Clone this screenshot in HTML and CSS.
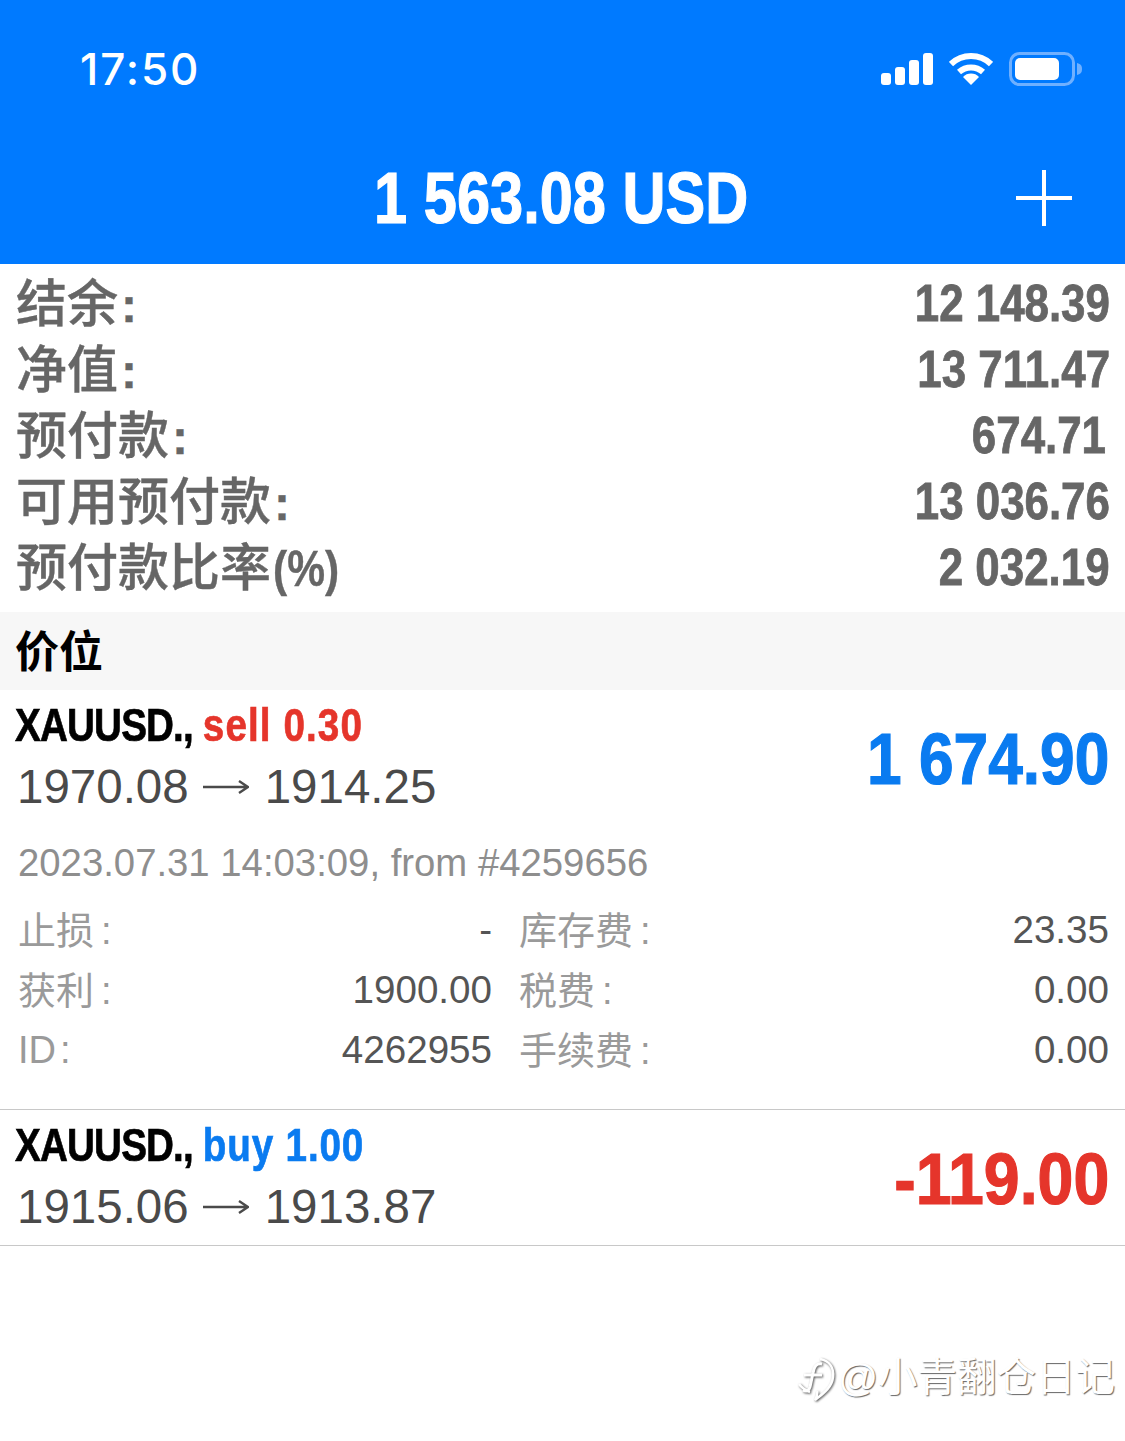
FILE: index.html
```html
<!DOCTYPE html>
<html lang="zh">
<head>
    <meta charset="UTF-8">
    <meta name="viewport" content="width=device-width, initial-scale=1.0">
    <title>交易</title>
    <link rel="stylesheet" href="styles.css">
</head>
<body>
    <header class="top-bar">
        <div class="status-bar">
            <span class="clock">17:50</span>
            <div class="status-icons">
                <svg width="52" height="34" viewBox="0 0 52 34">
                    <rect x="0" y="21" width="10" height="12" rx="3" fill="#fff"/>
                    <rect x="14" y="15" width="10" height="18" rx="3" fill="#fff"/>
                    <rect x="28" y="8" width="10" height="25" rx="3" fill="#fff"/>
                    <rect x="42" y="1" width="10" height="32" rx="3" fill="#fff"/>
                </svg>
                <svg width="44" height="34" viewBox="1 0 44 34">
                    <path d="M3 12 A29 29 0 0 1 43 12" fill="none" stroke="#fff" stroke-width="6"/>
                    <path d="M11 20 A18 18 0 0 1 35 20" fill="none" stroke="#fff" stroke-width="6"/>
                    <path d="M15 25 A11 11 0 0 1 31 25 L23 33 Z" fill="#fff"/>
                </svg>
                <svg width="74" height="34" viewBox="0 0 74 34">
                    <rect x="1.5" y="1.5" width="63" height="31" rx="9" fill="none" stroke="#6fb0ff" stroke-width="3"/>
                    <rect x="6" y="6" width="44" height="22" rx="5" fill="#fff"/>
                    <path d="M68 11 C72 12 73 14 73 17 C73 20 72 22 68 23 Z" fill="#6fb0ff"/>
                </svg>
            </div>
        </div>
        <div class="title-row">
            <h1 class="balance-title">1 563.08 USD</h1>
            <svg class="add-icon" width="56" height="56" viewBox="0 0 56 56">
                <path d="M26 0H30V26H56V30H30V56H26V30H0V26H26Z" fill="#fff"/>
            </svg>
        </div>
    </header>

    <section class="summary">
        <div class="summary-row"><span class="summary-label">结余<b class="colon">:</b></span><span class="summary-value">12 148.39</span></div>
        <div class="summary-row"><span class="summary-label">净值<b class="colon">:</b></span><span class="summary-value">13 711.47</span></div>
        <div class="summary-row"><span class="summary-label">预付款<b class="colon">:</b></span><span class="summary-value inset">674.71</span></div>
        <div class="summary-row"><span class="summary-label">可用预付款<b class="colon">:</b></span><span class="summary-value">13 036.76</span></div>
        <div class="summary-row"><span class="summary-label">预付款比率<b class="percent">(%)</b></span><span class="summary-value">2 032.19</span></div>
    </section>

    <h2 class="section-head">价位</h2>

    <article class="position expanded">
        <div class="position-main">
            <div class="position-info">
                <div class="position-name">XAUUSD., <span class="sell">sell 0.30</span></div>
                <div class="position-price">1970.08<svg class="arrow" width="46" height="20" viewBox="0 0 46 20"><path d="M0 10H45M36 4L45 10L36 16" fill="none" stroke="#4a4a4a" stroke-width="2.4"/></svg>1914.25</div>
            </div>
            <div class="position-profit gain">1 674.90</div>
        </div>
        <div class="position-date">2023.07.31 14:03:09, from #4259656</div>
        <div class="details">
            <span class="detail-label">止损<i class="colon-thin">:</i></span><span class="detail-value">-</span>
            <span class="detail-label">库存费<i class="colon-thin">:</i></span><span class="detail-value">23.35</span>
            <span class="detail-label">获利<i class="colon-thin">:</i></span><span class="detail-value">1900.00</span>
            <span class="detail-label">税费<i class="colon-thin">:</i></span><span class="detail-value">0.00</span>
            <span class="detail-label latin">ID<i class="colon-thin">:</i></span><span class="detail-value">4262955</span>
            <span class="detail-label">手续费<i class="colon-thin">:</i></span><span class="detail-value">0.00</span>
        </div>
    </article>

    <article class="position">
        <div class="position-main">
            <div class="position-info">
                <div class="position-name">XAUUSD., <span class="buy">buy 1.00</span></div>
                <div class="position-price">1915.06<svg class="arrow" width="46" height="20" viewBox="0 0 46 20"><path d="M0 10H45M36 4L45 10L36 16" fill="none" stroke="#4a4a4a" stroke-width="2.4"/></svg>1913.87</div>
            </div>
            <div class="position-profit loss">-119.00</div>
        </div>
    </article>

    <div class="watermark">
        <svg class="watermark-icon" width="38" height="46" viewBox="0 0 38 46">
            <path d="M22 3 C32 5 36 12 35 21 C34 31 26 37 17 44 C19 40 20 38 19 35" fill="none" stroke="#fff" stroke-width="2.5"/>
            <path d="M1 28 C3 31 7 34 12 36" fill="none" stroke="#fff" stroke-width="2.5"/>
            <path d="M24 8 C18 7 16 11 15 17 L12 31 C11 35 8 36 5 34 M6 19 H24" fill="none" stroke="#fff" stroke-width="3"/>
        </svg>
        <span>@小青翻仓日记</span>
    </div>
</body>
</html>
```

FILE: styles.css
```css
* {
    box-sizing: border-box;
}
html, body {
    margin: 0;
    padding: 0;
}
body {
    position: relative;
    width: 1125px;
    height: 1441px;
    overflow: hidden;
    background-color: #fff;
    font-family: "Liberation Sans", "Noto Sans CJK SC", sans-serif;
}
.top-bar {
    height: 264px;
    background-color: #007aff;
    color: #fff;
}
.status-bar {
    display: flex;
    justify-content: space-between;
    align-items: center;
    height: 138px;
    padding: 0 42px 0 80px;
}
.clock {
    font-family: "Inter", "Liberation Sans", sans-serif;
    font-size: 44px;
    font-weight: 500;
    letter-spacing: 1.9px;
}
.status-icons {
    display: flex;
    align-items: center;
    gap: 16px;
}
.title-row {
    position: relative;
    height: 126px;
    display: flex;
    justify-content: center;
    padding-right: 2px;
}
/* no condensed face installed, so the bold numbers get squeezed and thickened */
.balance-title {
    margin: 0;
    font-size: 72px;
    font-weight: 700;
    line-height: 120px;
    -webkit-text-stroke: 1.2px #fff;
    transform: scaleX(0.827);
}
.add-icon {
    position: absolute;
    right: 53px;
    top: 32px;
}
.summary {
    padding: 7px 15px 11px 16px;
    height: 348px;
}
.summary-row {
    display: flex;
    justify-content: space-between;
    align-items: center;
    height: 66px;
    color: #666;
}
.summary-label {
    padding-bottom: 8px;
    font-size: 51px;
    font-weight: 500;
    -webkit-text-stroke: 0.4px #666;
}
.colon {
    margin-left: 3px;
    font-size: 48px;
    font-weight: 700;
}
.percent {
    display: inline-block;
    margin-left: 2px;
    font-size: 50px;
    font-weight: 700;
    transform: scaleX(0.85);
    transform-origin: left;
}
.summary-value {
    padding-bottom: 2px;
    font-size: 51px;
    font-weight: 700;
    -webkit-text-stroke: 0.8px #666;
    transform: scaleX(0.86);
    transform-origin: right;
}
.summary-value.inset {
    margin-right: 4px;
}
.section-head {
    margin: 0;
    height: 78px;
    padding-left: 15px;
    background-color: #f7f7f7;
    color: #000;
    font-size: 44px;
    font-weight: 700;
    line-height: 82px;
}
.position {
    height: 136px;
    padding: 0 16px;
    border-bottom: 1px solid #c8c8c8;
}
.position.expanded {
    height: 420px;
}
.position-main {
    display: flex;
    justify-content: space-between;
    height: 136px;
}
.position-info {
    padding-top: 5px;
}
.position-name {
    margin-left: -1px;
    font-size: 46px;
    font-weight: 700;
    letter-spacing: -1px;
    line-height: 61px;
    color: #000;
    white-space: nowrap;
    -webkit-text-stroke: 0.7px #000;
    transform: scaleX(0.84);
    transform-origin: left;
}
.sell {
    color: #e5352b;
    letter-spacing: 1.3px;
    -webkit-text-stroke-color: #e5352b;
}
.buy {
    color: #0a7bf0;
    letter-spacing: 1px;
    -webkit-text-stroke-color: #0a7bf0;
}
.position-price {
    display: flex;
    align-items: center;
    padding-left: 1px;
    font-size: 47.5px;
    line-height: 62px;
    color: #4a4a4a;
}
.arrow {
    margin: 0 16px 0 14px;
}
.position-profit {
    align-self: center;
    padding-top: 1px;
    font-size: 72px;
    font-weight: 700;
    -webkit-text-stroke: 1.2px currentColor;
    transform: scaleX(0.864);
    transform-origin: right;
}
.gain {
    color: #0a7bf0;
}
.loss {
    color: #e5352b;
    transform: scaleX(0.895);
}
.position-date {
    margin-top: 7px;
    padding-left: 2px;
    font-size: 38.3px;
    line-height: 60px;
    color: #8e8e8e;
}
.details {
    display: grid;
    grid-template-columns: 160px 314px 199px 1fr;
    grid-auto-rows: 60px;
    margin-top: 7px;
    padding-left: 2px;
    align-items: center;
    font-size: 38px;
}
.detail-label {
    padding-bottom: 6px;
    color: #9a9a9a;
}
.detail-label.latin {
    padding: 1px 0 0;
}
.latin .colon-thin {
    margin-left: 4px;
}
.colon-thin {
    margin-left: 7px;
    font-style: normal;
}
.detail-value {
    font-size: 38.6px;
    text-align: right;
    color: #555;
}
.detail-label:nth-child(4n+3) {
    padding-left: 27px;
}
.watermark {
    position: absolute;
    right: 10px;
    top: 1345px;
    display: flex;
    align-items: center;
    gap: 2px;
    color: #fff;
    font-size: 39.5px;
    text-shadow: 1px 1px 1px #666;
}
.watermark-icon {
    margin-top: 11px;
    filter: drop-shadow(1px 1px 1px #555);
}
```
